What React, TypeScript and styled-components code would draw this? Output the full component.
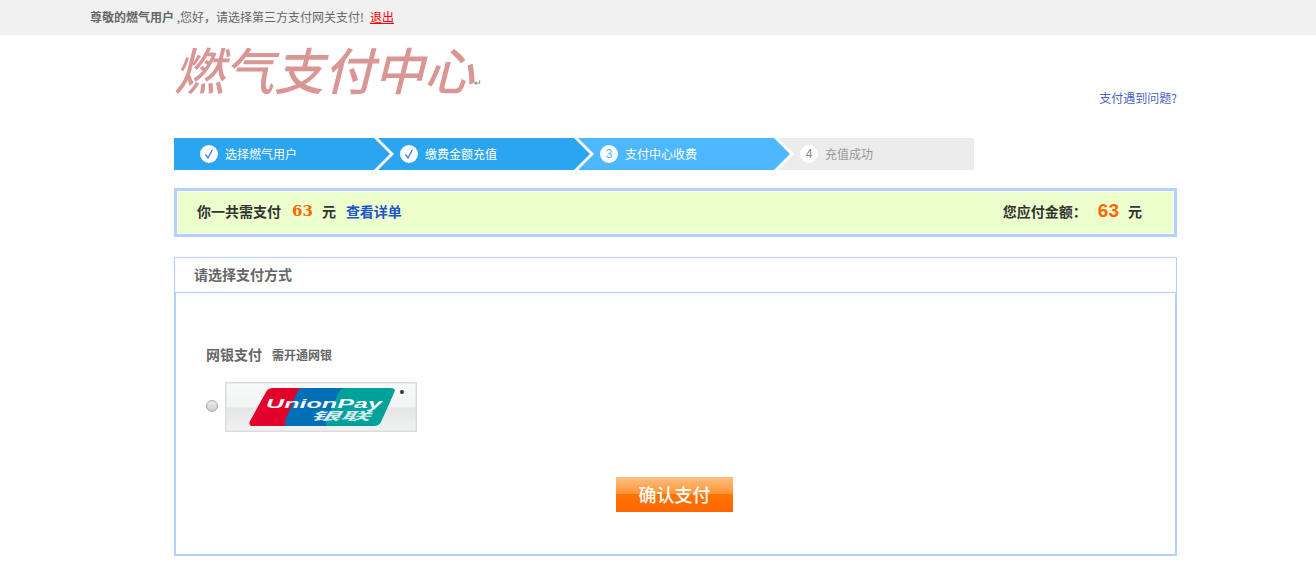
import styled, { createGlobalStyle } from 'styled-components';

const GlobalStyle = createGlobalStyle`
    html, body {
        margin: 0;
        padding: 0;
        background: #fff;
        font-family: "Noto Sans CJK SC", "Liberation Sans", sans-serif;
        font-size: 12px;
        color: #666;
    }
`

const TopBar = styled.div`
    height: 35px;
    box-sizing: border-box;
    background-color: #f1f1f1;
    padding: 0 0 2px 90px;
    display: flex;
    align-items: center;
    font-size: 12px;
    color: #666;
`
const UserName = styled.strong`
    font-weight: 700;
`
const Logout = styled.a`
    color: #f00;
    text-decoration: underline;
    margin-left: 6px;
`
const Page = styled.div`
    width: 1003px;
    margin-left: 174px;
`
const Header = styled.div`
    height: 103px;
    display: flex;
    justify-content: space-between;
    align-items: flex-start;
`
const Logo = styled.div`
    font-size: 50px;
    line-height: 50px;
    padding-top: 8px;
    font-style: italic;
    font-weight: 500;
    color: #d99694;
    white-space: nowrap;
`
const ReturnMark = styled.span`
    font-size: 9px;
    line-height: 8px;
    font-style: normal;
    font-weight: 400;
    color: #777;
    vertical-align: 4px;
`
const HelpLink = styled.a`
    font-size: 12px;
    line-height: 16px;
    margin-top: 55px;
    color: #4a5fc1;
`
const Steps = styled.div`
    display: flex;
    height: 32px;
    width: 800px;
`
const Step = styled.div<{ $bg: string; $color: string; $arrow: boolean }>`
    position: relative;
    width: 200px;
    height: 32px;
    display: flex;
    align-items: center;
    gap: 7px;
    padding-left: 26px;
    box-sizing: border-box;
    background-color: ${(p) => p.$bg};
    color: ${(p) => p.$color};
    font-size: 12px;
    &::before {
        content: ${(p) => (p.$arrow ? '""' : 'none')};
        position: absolute;
        z-index: 1;
        left: 100%;
        top: 0;
        width: 20px;
        height: 32px;
        background: #fff;
        clip-path: polygon(0 0, 4px 0, 20px 16px, 4px 32px, 0 32px);
    }
    &::after {
        content: ${(p) => (p.$arrow ? '""' : 'none')};
        position: absolute;
        z-index: 2;
        left: 100%;
        top: 0;
        width: 16px;
        height: 32px;
        background: ${(p) => p.$bg};
        clip-path: polygon(0 0, 16px 16px, 0 32px);
    }
`
const StepBadge = styled.span<{ $color: string }>`
    width: 18px;
    height: 18px;
    border-radius: 50%;
    background-color: #fff;
    display: flex;
    align-items: center;
    justify-content: center;
    color: ${(p) => p.$color};
    font-size: 12px;
    font-family: "Liberation Sans", sans-serif;
`
const StepLabel = styled.span`
    padding-bottom: 2px;
`
const Summary = styled.div`
    margin-top: 18px;
    height: 49px;
    box-sizing: border-box;
    border: 3px solid #b3d1ff;
    outline: 1px solid #fff;
    outline-offset: -4px;
    background-color: #ecffcc;
    display: flex;
    justify-content: space-between;
    align-items: center;
    padding: 0 32px 4px 20px;
    font-size: 14px;
    font-weight: 700;
    color: #333;
`
const SummaryGroup = styled.div`
    display: flex;
    align-items: center;
`
const Amount = styled.span<{ $size: number; $family: string }>`
    font-family: ${(p) => p.$family}, serif;
    font-size: ${(p) => p.$size}px;
    font-weight: 700;
    color: #ff6600;
    margin: 0 9px 0 11px;
`
const DetailLink = styled.a`
    color: #2255cc;
    margin-left: 10px;
`
const Panel = styled.div`
    margin-top: 20px;
`
const PanelTitle = styled.div`
    height: 35px;
    box-sizing: border-box;
    border: 1px solid #b3d1ff;
    border-bottom: none;
    padding-left: 19px;
    line-height: 32px;
    font-size: 14px;
    font-weight: 700;
    color: #666;
`
const PanelBody = styled.div`
    height: 264px;
    box-sizing: border-box;
    border: 2px solid #b3d1ff;
    border-top: 1px solid #b3d1ff;
    padding: 52px 30px 0;
`
const BankHeading = styled.div`
    display: flex;
    align-items: center;
    gap: 10px;
    height: 18px;
    font-weight: 700;
    color: #666;
`
const BankName = styled.span`
    font-size: 14px;
`
const BankNote = styled.span`
    font-size: 12px;
`
const BankRow = styled.div`
    display: flex;
    align-items: center;
    gap: 7px;
    margin-top: 19px;
`
const Radio = styled.span`
    width: 12px;
    height: 12px;
    margin-bottom: 2px;
    box-sizing: border-box;
    border-radius: 50%;
    border: 1px solid #aaa;
    background: linear-gradient(#eee, #ccc);
`
const BankCard = styled.svg`
    display: block;
`
const Actions = styled.div`
    margin-top: 45px;
    padding-left: 410px;
`
const ConfirmButton = styled.button`
    display: block;
    width: 117px;
    height: 35px;
    padding: 0 0 2px;
    border: none;
    background: linear-gradient(#fcc083 0, #ff9233 49%, #ff7400 50%, #ff6600 100%);
    color: #fff;
    font-family: "Noto Sans CJK SC", sans-serif;
    font-size: 18px;
    font-weight: 500;
    text-align: center;
`

const Check = () => (
    <svg width="12" height="12" viewBox="0 0 12 12">
        <path d="M2.5 6.5 L5 10 L9.5 1.5" fill="none" stroke="#3d7fe0" strokeWidth="1.3" />
    </svg>
);

const UnionPayCard = () => (
    <BankCard width="192" height="50" viewBox="0 0 192 50">
        <defs>
            <linearGradient id="cardBg" x1="0" y1="0" x2="0" y2="1">
                <stop offset="0" stopColor="#f9fafa" />
                <stop offset="0.5" stopColor="#f2f3f3" />
                <stop offset="0.52" stopColor="#e4e6e6" />
                <stop offset="1" stopColor="#f1f2f2" />
            </linearGradient>
        </defs>
        <rect x="0.75" y="0.75" width="190.5" height="48.5" fill="url(#cardBg)" stroke="#dcdcdc" strokeWidth="1.5" />
        <path d="M48 6 H90 L72 44 H28 Q23 44 25 39 L41 10 Q43 6 48 6 Z" fill="#e2002b" />
        <path d="M78 6 H125 L108 44 H63 Q58 44 60 39 L72 10 Q74 6 78 6 Z" fill="#006fb5" />
        <path d="M122 6 H165 Q172 6 169 11 L156 40 Q154 44 149 44 H104 Q99 44 101 39 L114 10 Q116 6 122 6 Z" fill="#00a19b" />
        <circle cx="177" cy="10" r="2" fill="#333" />
        <text x="41" y="26" fill="#f4f8fa" fontFamily="Liberation Sans, sans-serif" fontStyle="italic" fontWeight="700" fontSize="13" textLength="116" lengthAdjust="spacingAndGlyphs">UnionPay</text>
        <text x="85" y="38" fill="#d5e9ec" fontFamily="Noto Sans CJK SC, sans-serif" fontStyle="italic" fontWeight="700" fontSize="11" textLength="60" lengthAdjust="spacingAndGlyphs">银联</text>
    </BankCard>
);

export default function App() {
    return (
        <>
            <GlobalStyle />
            <TopBar>
                <UserName>尊敬的燃气用户</UserName>&nbsp;,您好，请选择第三方支付网关支付!
                <Logout>退出</Logout>
            </TopBar>
            <Page>
                <Header>
                    <Logo>燃气支付中心<ReturnMark>↵</ReturnMark></Logo>
                    <HelpLink>支付遇到问题?</HelpLink>
                </Header>
                <Steps>
                    <Step $bg="#2ba5f0" $color="#fff" $arrow>
                        <StepBadge $color="#3d7fe0"><Check /></StepBadge>
                        <StepLabel>选择燃气用户</StepLabel>
                    </Step>
                    <Step $bg="#2ba5f0" $color="#fff" $arrow>
                        <StepBadge $color="#3d7fe0"><Check /></StepBadge>
                        <StepLabel>缴费金额充值</StepLabel>
                    </Step>
                    <Step $bg="#4db8ff" $color="#fff" $arrow>
                        <StepBadge $color="#4db8ff">3</StepBadge>
                        <StepLabel>支付中心收费</StepLabel>
                    </Step>
                    <Step $bg="#ececec" $color="#999" $arrow={false}>
                        <StepBadge $color="#888">4</StepBadge>
                        <StepLabel>充值成功</StepLabel>
                    </Step>
                </Steps>
                <Summary>
                    <SummaryGroup>
                        你一共需支付<Amount $size={15} $family='"DejaVu Serif"'>63</Amount>元<DetailLink>查看详单</DetailLink>
                    </SummaryGroup>
                    <SummaryGroup>
                        您应付金额：<Amount $size={19} $family='"Liberation Sans"'>63</Amount>元
                    </SummaryGroup>
                </Summary>
                <Panel>
                    <PanelTitle>请选择支付方式</PanelTitle>
                    <PanelBody>
                        <BankHeading>
                            <BankName>网银支付</BankName>
                            <BankNote>需开通网银</BankNote>
                        </BankHeading>
                        <BankRow>
                            <Radio />
                            <UnionPayCard />
                        </BankRow>
                        <Actions>
                            <ConfirmButton>确认支付</ConfirmButton>
                        </Actions>
                    </PanelBody>
                </Panel>
            </Page>
        </>
    );
}
